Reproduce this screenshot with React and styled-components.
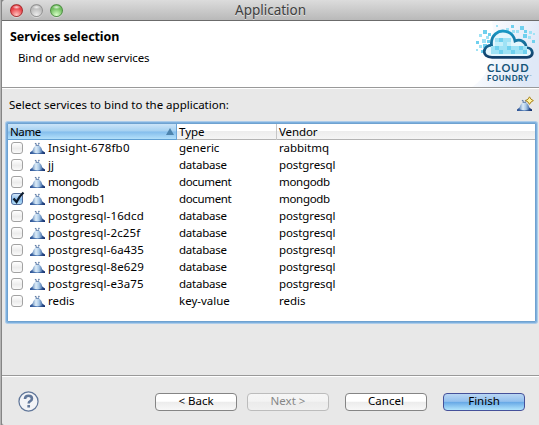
import React from "react";
import styled, { createGlobalStyle, css } from "styled-components";

const GlobalStyle = createGlobalStyle`
  * { box-sizing: border-box; }
  body { margin: 0; background: #9b9b9b; overflow: hidden; }
`;

const Screen = styled.div`
  width: 539px;
  height: 425px;
  padding-left: 2px;
  background: linear-gradient(90deg, #b4b4b4 0, #b4b4b4 1px, #858585 1px, #858585 2px);
  font-family: "Noto Sans", "Open Sans", sans-serif;
  font-size: 11.5px;
  color: #000;
  overflow: hidden;
`;

const Window = styled.main`
  display: flex;
  flex-direction: column;
  height: 425px;
  background: #e8e8e8;
  border-top-left-radius: 4px;
  border-bottom-left-radius: 2px;
  overflow: hidden;
`;

const Text = styled.span`
  white-space: pre;
  letter-spacing: ${(p) => p.$track ?? 0}px;
`;

const TitleBar = styled.header`
  display: grid;
  grid-template-columns: 233px 1fr;
  align-items: center;
  flex: none;
  height: 21px;
  background: linear-gradient(#dcdcdc, #b9b9b9);
  border-bottom: 1px solid #6b6b6b;
  font-size: 13.5px;
  line-height: 18px;
  color: #404040;
  text-shadow: 0 1px 0 #e4e4e4;
`;

const Lights = styled.div`
  display: flex;
  gap: 7px;
  padding-left: 8px;
`;

const lights = {
  red: ["#8e2020", "#e8434a", "#ffc5c0"],
  gray: ["#808080", "#bcbcbc", "#ececec"],
  green: ["#3d7a35", "#72bf61", "#d8ffc8"],
};

const Light = styled.span`
  width: 13px;
  height: 13px;
  border-radius: 50%;
  border: 1px solid ${(p) => lights[p.$tone][0]}c0;
  background:
    radial-gradient(ellipse 4px 2px at 50% 20%, #ffffffd0, #ffffff00),
    radial-gradient(circle at 50% 90%, ${(p) => lights[p.$tone][2]}, ${(p) => lights[p.$tone][1]} 60%);
  box-shadow: 0 1px 0 #ffffff70;
`;

const Banner = styled.section`
  display: flex;
  justify-content: space-between;
  flex: none;
  height: 68px;
  background: #fff;
  border-bottom: 1px solid #fff;
`;

const BannerInner = styled.div`
  display: flex;
  flex: 1;
  justify-content: space-between;
  height: 67px;
  border-bottom: 1px solid #999;
`;

const BannerCopy = styled.div`
  padding: 7px 0 0 8px;
`;

const Heading = styled.h1`
  margin: 0;
  font-size: 12.5px;
  line-height: 17px;
  font-weight: 700;
`;

const Subtitle = styled.p`
  margin: 4px 0 0 8px;
  line-height: 17px;
`;

const Prompt = styled.div`
  display: flex;
  align-items: center;
  justify-content: space-between;
  flex: none;
  height: 32px;
  padding: 0 5px 2px 7px;
`;

const Table = styled.section`
  flex: none;
  width: 529px;
  height: 199px;
  margin: 2px 0 0 5px;
  background: #fff;
  border: 1px solid #6fa2d0;
  box-shadow: 0 0 0 1px #7eb0de, 0 0 0 2px #acccea;
  border-radius: 1px;
`;

const columns = css`
  display: grid;
  grid-template-columns: 169px 100px 1fr;
`;

const TableHead = styled.div`
  ${columns}
  height: 16px;
  border-bottom: 1px solid #b4b4b4;
  background: linear-gradient(#fff 0, #fff 45%, #ededed 50%, #f5f5f5 100%);
`;

const HeadCell = styled.div`
  display: flex;
  align-items: center;
  justify-content: space-between;
  height: 16px;
  padding: 0 2px 1px 2px;
  line-height: 15px;
  border-right: ${(p) => (p.$last ? "0" : "1px solid #c6c6c6")};
  ${(p) =>
    p.$sorted &&
    css`
      border-right-color: #6ba5d8;
      border-bottom: 1px solid #5f9fd2;
      padding-bottom: 0;
      background: linear-gradient(#cbe4f8 0, #a4d0f1 48%, #83bdec 52%, #b3e0fa 100%);
    `}
`;

const Row = styled.div`
  ${columns}
  height: 17px;
  line-height: 15px;
`;

const Cell = styled.div`
  padding-left: 2px;
`;

const NameCell = styled.div`
  display: grid;
  grid-template-columns: 19px 18px 1fr;
  align-items: start;
  padding-left: 3px;
`;

const Check = styled.span`
  display: block;
  width: 12px;
  height: 12px;
  margin-top: 2px;
  border: 1px solid ${(p) => (p.$on ? "#506b9b" : "#a2a2a2")};
  border-radius: 3px;
  background: ${(p) =>
    p.$on ? "linear-gradient(#d2e6f9, #85b9ea 55%, #b9e2fa)" : "linear-gradient(#fff, #ececec 55%, #fafafa)"};
`;

const CheckMark = styled.svg`
  display: block;
  margin-top: -2px;
  overflow: visible;
`;

const RowIcon = styled.span`
  display: flex;
  padding-top: 2px;
`;

const Spacer = styled.div`
  flex: 1;
`;

const Footer = styled.footer`
  display: flex;
  align-items: center;
  flex: none;
  height: 50px;
  padding: 2px 14px 0 16px;
  border-top: 1px solid #999;
  box-shadow: inset 0 1px 0 #fff;
`;

const Button = styled.button`
  width: 82px;
  height: 18px;
  padding: 0 0 2px;
  border: 1px solid #858585;
  border-radius: 4px;
  background: linear-gradient(#fff 0, #fff 45%, #ececec 52%, #f8f8f8 100%);
  font: inherit;
  line-height: 14px;
  color: #000;
  ${(p) =>
    p.$kind === "disabled" &&
    css`
      border-color: #bcbcbc;
      color: #868686;
      background: linear-gradient(#f6f6f6 0, #f3f3f3 45%, #ebebeb 52%, #f0f0f0 100%);
    `}
  ${(p) =>
    p.$kind === "primary" &&
    css`
      border-color: #45519a;
      background: linear-gradient(#b9d6f3 0, #93c0ee 46%, #68a9e6 52%, #b0e4fc 100%);
    `}
`;

const ButtonRow = styled.div`
  display: flex;
  margin-left: auto;
  gap: ${(p) => p.$gap}px;
`;

function ServiceShape() {
  return (
    <>
      <defs>
        <linearGradient id="dome" x1="0" x2="1">
          <stop offset="0" stopColor="#7297c4" />
          <stop offset="0.35" stopColor="#dcecf8" />
          <stop offset="0.65" stopColor="#a9c8e6" />
          <stop offset="1" stopColor="#3f69a6" />
        </linearGradient>
        <linearGradient id="base" x1="0" x2="1">
          <stop offset="0" stopColor="#2b5092" />
          <stop offset="0.5" stopColor="#5c87bd" />
          <stop offset="1" stopColor="#0f2a69" />
        </linearGradient>
      </defs>
      <path d="M0 12V10.6L2.6 8.4H12.2L15 10.6V12Z" fill="url(#base)" />
      <path d="M2.4 10.2C2.6 6.6 4.2 4.6 6 3.6H8.8C10.8 4.6 12.2 6.6 12.5 10.2Q7.5 12.2 2.4 10.2Z" fill="url(#dome)" />
      <path d="M5 1.2L6.7 2.4M9.4 1L8.2 2.4" stroke="#5c7aa4" strokeWidth="1.2" fill="none" />
      <path d="M5.6 3.4H9.2" stroke="#6787b2" />
    </>
  );
}

const ServiceIcon = () => (
  <svg width="15" height="12" viewBox="0 0 15 12">
    <ServiceShape />
  </svg>
);

const NewServiceIcon = () => (
  <svg width="17" height="16" viewBox="0 0 17 16">
    <g transform="translate(0 3)">
      <ServiceShape />
    </g>
    <path d="M12.5 .8L14 3.2L16.4 4.6L14 6L12.5 8.4L11 6L8.6 4.6L11 3.2Z" fill="#fff4a0" stroke="#ab841b" strokeWidth="1" />
  </svg>
);

const pixels = [
  [44, 5, 4], [40, 9, 3], [35, 4, 3], [36, 9, 3], [48, 9, 3], [30, 7, 3], [26, 10, 2], [20, 4, 2],
  [7, 9, 4], [3, 13, 3], [12, 12, 3], [6, 18, 4], [0, 20, 3], [10, 15, 3], [11, 19, 3],
  [3, 24, 3], [7, 23, 4], [0, 28, 2], [5, 29, 3], [53, 10, 3], [47, 13, 4], [52, 15, 3], [56, 19, 3], [57, 12, 2],
];

const shade = ["#6fd0ee", "#9fe2f5", "#c5effa"];

function Logo() {
  return (
    <svg width="67" height="66" viewBox="0 0 67 66">
      <defs>
        <linearGradient id="glow" x1="0" y1="0" x2="1" y2="0.35">
          <stop offset="0.15" stopColor="#fff" />
          <stop offset="1" stopColor="#dfe8f7" />
        </linearGradient>
        <linearGradient id="edge" x1="0" y1="0" x2="0" y2="1">
          <stop offset="0" stopColor="#1998c5" />
          <stop offset="1" stopColor="#113e69" />
        </linearGradient>
      </defs>
      <path d="M0 66Q28 48 20 0H67V66Z" fill="url(#glow)" />
      {pixels.map(([x, y, s], i) => (
        <rect key={`${x}-${y}`} x={x + 4} y={y} width={s} height={s} fill={shade[i % 2]} />
      ))}
      <path
        d="M20 36.3C9 36.3 10.5 25 19.5 24C18.5 14 26.5 8.8 33.5 10.3C38.5 11.3 42 15 43 20C48.5 17.5 54 21 54 26.3C62 26.8 62.5 36.3 55 36.3Z"
        fill="#e4f6fd"
        stroke="url(#edge)"
        strokeWidth="2.8"
      />
      {[17, 21, 25, 29].map((y, r) =>
        [19, 23, 27, 31, 35, 39, 43, 47, 51]
          .filter((x) => y > 24 || (x > 21 && x < 39))
          .map((x) => (
            <rect key={`${x}-${y}`} x={x} y={y} width="4" height="4" fill={shade[(r * 2 + x * x + r * x) % 3]} />
          ))
      )}
      <text x="15" y="50.8" fontFamily="Lato" fontWeight="700" fontSize="11" textLength="41.5" fill="#155478">CLOUD</text>
      <text x="15" y="60.3" fontFamily="Lato" fontWeight="900" fontSize="7.7" textLength="41.5" fill="#155478">FOUNDRY</text>
      <text x="57.5" y="56" fontFamily="Lato" fontSize="2.5" fill="#155478">™</text>
    </svg>
  );
}

const services = [
  ["Insight-678fb0", "generic", "rabbitmq"],
  ["jj", "database", "postgresql"],
  ["mongodb", "document", "mongodb"],
  ["mongodb1", "document", "mongodb", true],
  ["postgresql-16dcd", "database", "postgresql"],
  ["postgresql-2c25f", "database", "postgresql"],
  ["postgresql-6a435", "database", "postgresql"],
  ["postgresql-8e629", "database", "postgresql"],
  ["postgresql-e3a75", "database", "postgresql"],
  ["redis", "key-value", "redis"],
];

const tracking = {
  mongodb: -0.3,
  mongodb1: -0.3,
  document: -0.35,
  database: -0.25,
  postgresql: -0.1,
  "Insight-678fb0": 0.2,
};

const trackOf = (s) => tracking[s] ?? (s.startsWith("postgresql-") ? 0.13 : 0);

export default function App() {
  return (
    <Screen>
      <GlobalStyle />
      <Window>
        <TitleBar>
          <Lights>
            <Light $tone="red" />
            <Light $tone="gray" />
            <Light $tone="green" />
          </Lights>
          <Text>Application</Text>
        </TitleBar>
        <Banner>
          <BannerInner>
            <BannerCopy>
              <Heading><Text $track={-0.08}>Services selection</Text></Heading>
              <Subtitle><Text $track={-0.12}>Bind or add new services</Text></Subtitle>
            </BannerCopy>
            <Logo />
          </BannerInner>
        </Banner>
        <Prompt>
          <Text>Select services to bind to the application:</Text>
          <NewServiceIcon />
        </Prompt>
        <Table>
          <TableHead>
            <HeadCell $sorted>
              <Text $track={-0.4}>Name</Text>
              <svg width="8" height="7" viewBox="0 0 8 7"><path d="M4 0L8 7H0Z" fill="#4d84ae" /></svg>
            </HeadCell>
            <HeadCell><Text>Type</Text></HeadCell>
            <HeadCell $last><Text $track={-0.1}>Vendor</Text></HeadCell>
          </TableHead>
          {services.map(([name, type, vendor, on]) => (
            <Row key={name}>
              <NameCell>
                <Check $on={on}>
                  {on && (
                    <CheckMark width="13" height="13" viewBox="0 0 13 13">
                      <path d="M1.5 6.5L4.5 10Q7 4.5 11.5 .5" fill="none" stroke="#0c1a2b" strokeWidth="2.3" />
                    </CheckMark>
                  )}
                </Check>
                <RowIcon><ServiceIcon /></RowIcon>
                <Text $track={trackOf(name)}>{name}</Text>
              </NameCell>
              <Cell><Text $track={trackOf(type)}>{type}</Text></Cell>
              <Cell><Text $track={trackOf(vendor)}>{vendor}</Text></Cell>
            </Row>
          ))}
        </Table>
        <Spacer />
        <Footer>
          <svg width="21" height="21" viewBox="0 0 22 22">
            <circle cx="11" cy="11" r="10" fill="#f3f4f7" stroke="#61779a" strokeWidth="1.3" />
            <path d="M7.3 8.4Q7.5 5 11 5Q14.6 5 14.6 8Q14.6 9.5 12.8 10.6Q11.2 11.5 11.2 13" fill="none" stroke="#61779a" strokeWidth="2.7" />
            <rect x="9.8" y="14.7" width="2.8" height="2.6" fill="#61779a" />
          </svg>
          <ButtonRow $gap={16}>
            <ButtonRow $gap={10}>
              <Button><Text>&lt; Back</Text></Button>
              <Button $kind="disabled"><Text>Next &gt;</Text></Button>
            </ButtonRow>
            <Button><Text>Cancel</Text></Button>
            <Button $kind="primary"><Text>Finish</Text></Button>
          </ButtonRow>
        </Footer>
      </Window>
    </Screen>
  );
}
